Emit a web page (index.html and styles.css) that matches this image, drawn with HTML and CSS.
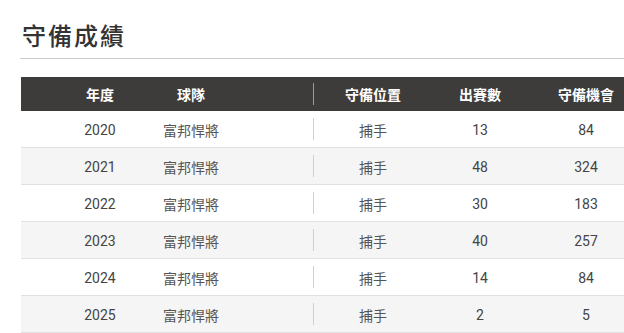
FILE: index.html
```html
<!DOCTYPE html>
<html lang="zh-Hant">
<head>
<meta charset="utf-8">
<title>守備成績</title>
<link rel="stylesheet" href="styles.css">
</head>
<body>
<section class="page">
  <h2 class="title">守備成績</h2>
  <div class="stats">
    <div class="row head">
      <div class="c year">年度</div>
      <div class="c team">球隊</div>
      <div class="c pos">守備位置</div>
      <div class="c num">出賽數</div>
      <div class="c num">守備機會</div>
    </div>
    <div class="row">
      <div class="c year">2020</div>
      <div class="c team">富邦悍將</div>
      <div class="c pos">捕手</div>
      <div class="c num">13</div>
      <div class="c num">84</div>
    </div>
    <div class="row alt">
      <div class="c year">2021</div>
      <div class="c team">富邦悍將</div>
      <div class="c pos">捕手</div>
      <div class="c num">48</div>
      <div class="c num">324</div>
    </div>
    <div class="row">
      <div class="c year">2022</div>
      <div class="c team">富邦悍將</div>
      <div class="c pos">捕手</div>
      <div class="c num">30</div>
      <div class="c num">183</div>
    </div>
    <div class="row alt">
      <div class="c year">2023</div>
      <div class="c team">富邦悍將</div>
      <div class="c pos">捕手</div>
      <div class="c num">40</div>
      <div class="c num">257</div>
    </div>
    <div class="row">
      <div class="c year">2024</div>
      <div class="c team">富邦悍將</div>
      <div class="c pos">捕手</div>
      <div class="c num">14</div>
      <div class="c num">84</div>
    </div>
    <div class="row alt">
      <div class="c year">2025</div>
      <div class="c team">富邦悍將</div>
      <div class="c pos">捕手</div>
      <div class="c num">2</div>
      <div class="c num">5</div>
    </div>
  </div>
</section>
</body>
</html>
```
FILE: styles.css
```css
html, body {
  margin: 0;
  padding: 0;
  background: #fff;
  overflow: hidden;
}
body {
  font-family: "Roboto", "Noto Sans CJK TC", sans-serif;
  color: #444;
}
.page {
  padding: 20px 0 0 20px;
}
.title {
  margin: 0;
  padding: 0 0 8px 2px;
  font-family: "Noto Sans CJK TC", sans-serif;
  font-size: 24px;
  line-height: 30px;
  font-weight: 500;
  letter-spacing: 2px;
  color: #333;
  border-bottom: 1px solid #ccc;
}
.stats {
  margin: 18px 0 0 1px;
  overflow: hidden;
}
.row {
  display: grid;
  grid-template-columns: 142px 150px 120px 94px 118px;
  width: 624px;
  height: 36px;
  border-bottom: 1px solid #e0e0e0;
  font-size: 14px;
}
.row.alt {
  background: #f5f5f5;
}
.row.head {
  height: 34px;
  border-bottom: 0;
  background: #3e3c3b;
  color: #fff;
  font-weight: 700;
  font-family: "Noto Sans CJK TC", sans-serif;
}
.c {
  display: flex;
  align-items: center;
  justify-content: center;
  padding-top: 1px;
}
.head .c {
  padding-top: 0;
}
.year {
  padding-left: 16px;
}
.team {
  padding-right: 94px;
  font-family: "Noto Sans CJK TC", sans-serif;
  color: #555;
}
.head .team {
  color: #fff;
}
.pos {
  position: relative;
  font-family: "Noto Sans CJK TC", sans-serif;
  color: #555;
}
.head .pos {
  color: #fff;
}
.pos::before {
  content: "";
  position: absolute;
  left: 0;
  top: 7px;
  bottom: 7px;
  width: 1px;
  background: #d0d0d0;
}
.head .pos::before {
  top: 6px;
  bottom: 6px;
  background: #9a9a9a;
}
```
